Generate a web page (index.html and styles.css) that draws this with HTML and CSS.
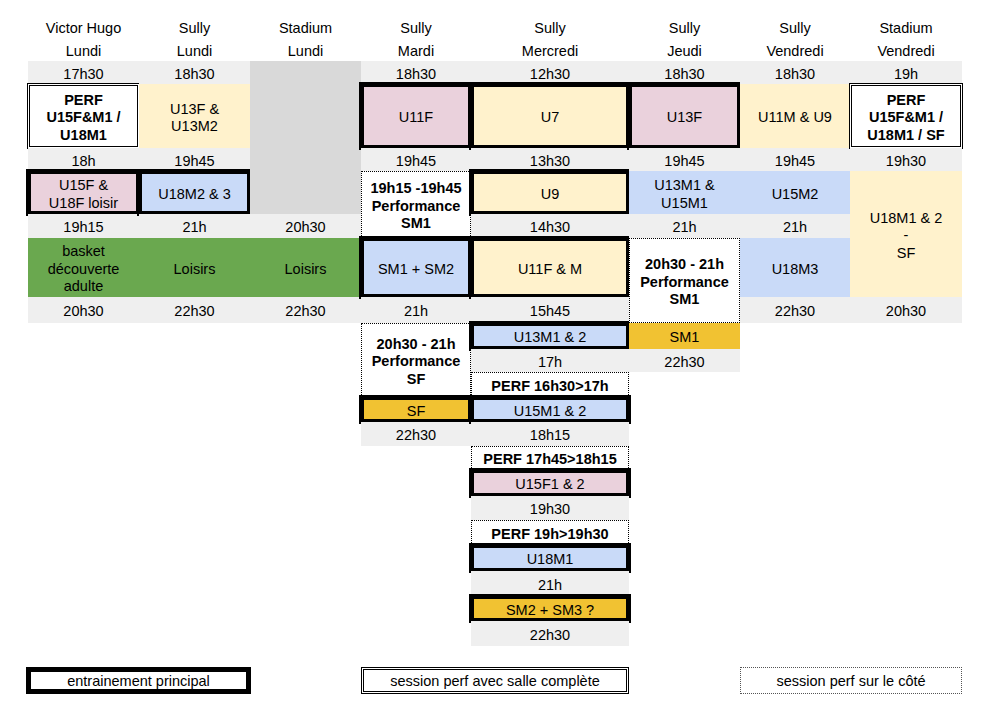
FILE: index.html
```html
<!DOCTYPE html>
<html lang="fr">
<head>
<meta charset="utf-8">
<title>Planning entraînements</title>
<link rel="stylesheet" href="styles.css">
</head>
<body>
<main class="page">
  <section class="grid">
    <!-- headers -->
    <div class="hd c1">Victor Hugo<br>Lundi</div>
    <div class="hd c2">Sully<br>Lundi</div>
    <div class="hd c3">Stadium<br>Lundi</div>
    <div class="hd c4">Sully<br>Mardi</div>
    <div class="hd c5">Sully<br>Mercredi</div>
    <div class="hd c6">Sully<br>Jeudi</div>
    <div class="hd c7">Sully<br>Vendredi</div>
    <div class="hd c8">Stadium<br>Vendredi</div>

    <!-- col 1 -->
    <div class="cell t c1 r3">17h30</div>
    <div class="cell dbl b c1 r4">PERF<br>U15F&amp;M1 /<br>U18M1</div>
    <div class="cell t c1 r5">18h</div>
    <div class="cell pink thick c1 r6">U15F &amp;<br>U18F loisir</div>
    <div class="cell t c1 r7">19h15</div>
    <div class="cell green c1 r8">basket<br>découverte<br>adulte</div>
    <div class="cell t c1 r9">20h30</div>

    <!-- col 2 -->
    <div class="cell t c2 r3">18h30</div>
    <div class="cell yellow c2 r4">U13F &amp;<br>U13M2</div>
    <div class="cell t c2 r5">19h45</div>
    <div class="cell blue thick c2 r6">U18M2 &amp; 3</div>
    <div class="cell t c2 r7">21h</div>
    <div class="cell green c2 r8">Loisirs</div>
    <div class="cell t c2 r9">22h30</div>

    <!-- col 3 -->
    <div class="cell dark c3 r3 s4"></div>
    <div class="cell t c3 r7">20h30</div>
    <div class="cell green c3 r8">Loisirs</div>
    <div class="cell t c3 r9">22h30</div>

    <!-- col 4 -->
    <div class="cell t c4 r3">18h30</div>
    <div class="cell pink thick c4 r4">U11F</div>
    <div class="cell t c4 r5">19h45</div>
    <div class="cell dot b c4 r6 s2">19h15 -19h45<br>Performance<br>SM1</div>
    <div class="cell blue thick c4 r8">SM1 + SM2</div>
    <div class="cell t c4 r9">21h</div>
    <div class="cell dot b c4 r10 s3">20h30 - 21h<br>Performance<br>SF</div>
    <div class="cell gold thick c4 r13">SF</div>
    <div class="cell t c4 r14">22h30</div>

    <!-- col 5 -->
    <div class="cell t c5 r3">12h30</div>
    <div class="cell yellow thick c5 r4">U7</div>
    <div class="cell t c5 r5">13h30</div>
    <div class="cell yellow thick c5 r6">U9</div>
    <div class="cell t c5 r7">14h30</div>
    <div class="cell yellow thick c5 r8">U11F &amp; M</div>
    <div class="cell t c5 r9">15h45</div>
    <div class="cell blue thick c5 r10">U13M1 &amp; 2</div>
    <div class="cell t c5 r11">17h</div>
    <div class="cell dot b c5 r12">PERF 16h30&gt;17h</div>
    <div class="cell blue thick c5 r13">U15M1 &amp; 2</div>
    <div class="cell t c5 r14">18h15</div>
    <div class="cell dot b c5 r15">PERF 17h45&gt;18h15</div>
    <div class="cell pink thick c5 r16">U15F1 &amp; 2</div>
    <div class="cell t c5 r17">19h30</div>
    <div class="cell dot b c5 r18">PERF 19h&gt;19h30</div>
    <div class="cell blue thick c5 r19">U18M1</div>
    <div class="cell t c5 r20">21h</div>
    <div class="cell gold thick c5 r21">SM2 + SM3 ?</div>
    <div class="cell t c5 r22">22h30</div>

    <!-- col 6 -->
    <div class="cell t c6 r3">18h30</div>
    <div class="cell pink thick c6 r4">U13F</div>
    <div class="cell t c6 r5">19h45</div>
    <div class="cell blue c6 r6">U13M1 &amp;<br>U15M1</div>
    <div class="cell t c6 r7">21h</div>
    <div class="cell dot b c6 r8 s2">20h30 - 21h<br>Performance<br>SM1</div>
    <div class="cell gold c6 r10">SM1</div>
    <div class="cell t c6 r11">22h30</div>

    <!-- col 7 -->
    <div class="cell t c7 r3">18h30</div>
    <div class="cell yellow c7 r4">U11M &amp; U9</div>
    <div class="cell t c7 r5">19h45</div>
    <div class="cell blue c7 r6">U15M2</div>
    <div class="cell t c7 r7">21h</div>
    <div class="cell blue c7 r8">U18M3</div>
    <div class="cell t c7 r9">22h30</div>

    <!-- col 8 -->
    <div class="cell t c8 r3">19h</div>
    <div class="cell dbl b c8 r4">PERF<br>U15F&amp;M1 /<br>U18M1 / SF</div>
    <div class="cell t c8 r5">19h30</div>
    <div class="cell yellow c8 r6 s3">U18M1 &amp; 2<br>-<br>SF</div>
    <div class="cell t c8 r9">20h30</div>
  </section>

  <section class="legend">
    <div class="lg lg-thick">entrainement principal</div>
    <div class="lg lg-double">session perf avec salle complète</div>
    <div class="lg lg-dot">session perf sur le côté</div>
  </section>
</main>
</body>
</html>
```

FILE: styles.css
```css
* { box-sizing: border-box; }

html, body {
  margin: 0;
  padding: 0;
  background: #ffffff;
}

body {
  font-family: "Liberation Sans", Arial, sans-serif;
  font-size: 14.5px;
  color: #000;
}

.page {
  padding: 15px 0 0 28px;
}

.grid {
  display: grid;
  grid-template-columns: 111px 111px 111px 110px 158px 111px 110px 112px;
  grid-template-rows:
    23px 23px
    23px 64px 23px 43px 24px 59px 26px
    26px 23px 25px 25px 24px 24px 26px 24px 25px 26px 25px 25px 25px;
}

.hd {
  grid-row: 1 / span 2;
  text-align: center;
  line-height: 23px;
  padding-top: 2px;
}

.cell {
  display: flex;
  align-items: center;
  justify-content: center;
  text-align: center;
  line-height: 17.5px;
  padding-top: 4px;
}

/* columns */
.c1 { grid-column: 1; }
.c2 { grid-column: 2; }
.c3 { grid-column: 3; }
.c4 { grid-column: 4; }
.c5 { grid-column: 5; }
.c6 { grid-column: 6; }
.c7 { grid-column: 7; }
.c8 { grid-column: 8; }

/* rows */
.r3 { grid-row: 3; }
.r4 { grid-row: 4; }
.r5 { grid-row: 5; }
.r6 { grid-row: 6; }
.r7 { grid-row: 7; }
.r8 { grid-row: 8; }
.r9 { grid-row: 9; }
.r10 { grid-row: 10; }
.r11 { grid-row: 11; }
.r12 { grid-row: 12; }
.r13 { grid-row: 13; }
.r14 { grid-row: 14; }
.r15 { grid-row: 15; }
.r16 { grid-row: 16; }
.r17 { grid-row: 17; }
.r18 { grid-row: 18; }
.r19 { grid-row: 19; }
.r20 { grid-row: 20; }
.r21 { grid-row: 21; }
.r22 { grid-row: 22; }

/* row spans */
.s2 { grid-row-end: span 2; }
.s3 { grid-row-end: span 3; }
.s4 { grid-row-end: span 4; }

/* fills */
.t { background: #efefef; }
.dark { background: #d9d9d9; }
.pink { background: #ead1dc; }
.yellow { background: #fff2cc; }
.blue { background: #c9daf8; }
.green { background: #6aa84f; }
.gold { background: #f1c232; }

.b { font-weight: bold; }

/* borders */
.thick {
  outline: 5px solid #000;
  outline-offset: -3px;
}

.dbl {
  background: #fff;
  outline: 3px double #000;
  outline-offset: -2px;
}

.dot {
  background: #fff;
  border: 1px dotted #000;
}

/* legend */
.legend {
  display: grid;
  grid-template-columns: 111px 111px 111px 110px 158px 111px 110px 112px;
  margin-top: 21px;
  height: 27px;
}

.lg {
  display: flex;
  align-items: center;
  justify-content: center;
  font-size: 14.5px;
  background: #fff;
}

.lg-thick {
  grid-column: 1 / span 2;
  border: 5px solid #000;
  margin: 0 -1px 0 -2px;
}

.lg-double {
  grid-column: 4 / span 2;
  border: 3px double #000;
}

.lg-dot {
  grid-column: 7 / span 2;
  border: 1px dotted #555;
}
```
